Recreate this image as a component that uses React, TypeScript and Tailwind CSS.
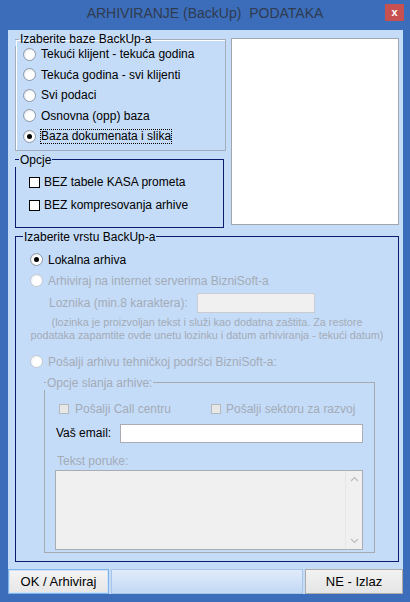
import React from "react";

function Radio({ checked = false, disabled = false }: { checked?: boolean; disabled?: boolean }) {
  return (
    <span
      className={
        "flex h-[13px] w-[13px] shrink-0 items-center justify-center rounded-full border " +
        (disabled
          ? "border-[#c3cad3] bg-[radial-gradient(circle_at_60%_60%,#ffffff_45%,#e4e7ec_100%)]"
          : "border-[#8e99a9] bg-[radial-gradient(circle_at_60%_60%,#ffffff_45%,#cfd4dc_100%)]")
      }
    >
      {checked && <span className="h-[5px] w-[5px] rounded-full bg-black" />}
    </span>
  );
}

function Check({ disabled = false }: { disabled?: boolean }) {
  return (
    <span
      className={
        disabled
          ? "h-[10px] w-[10px] shrink-0 border border-[#b4b8be] bg-[#e8e8e8]"
          : "h-[11px] w-[11px] shrink-0 border border-black bg-white"
      }
    />
  );
}

// legend with the short border stub drawn before the text
function Legend({ text, line, lead = 4, className = "" }: { text: string; line: string; lead?: number; className?: string }) {
  return (
    <legend className={"-ml-px flex h-[14px] items-center leading-[14px] " + className}>
      <span className={"h-px " + line} style={{ width: lead }} />
      <span className="px-[1px]">{text}</span>
    </legend>
  );
}

export default function App() {
  const dis = "text-[#a3abb7]";
  return (
    <div className="flex h-[602px] w-[410px] flex-col bg-[#3c6dba] font-['Liberation_Sans',Arial,sans-serif] text-[12px] text-black">
      {/* title bar */}
      <div className="grid h-[30px] grid-cols-[1fr_auto_1fr]">
        <div />
        <div className="whitespace-pre pt-[5px] text-[14px] leading-[16px] text-[#2f3b4f]">
          ARHIVIRANJE (BackUp)  PODATAKA
        </div>
        <div className="flex justify-end pr-[6px] pt-[4px]">
          <div className="flex h-[17px] w-[19px] items-center justify-center bg-[#c75050] text-[11px] font-bold leading-none text-white">
            x
          </div>
        </div>
      </div>

      {/* client */}
      <div className="mb-[8px] ml-[8px] mr-[7px] flex flex-1 flex-col bg-[#c5dcf8]">
        <div className="flex flex-col pl-[7px] pr-[4px] pt-[2px]">
          <div className="flex items-start">
            <div className="flex w-[212px] flex-col">
              <fieldset className="border border-[#a4adb9] pb-[3px] shadow-[inset_1px_1px_0_#fff]">
                <Legend text="Izaberite baze BackUp-a" line="bg-[#a4adb9]" />
                <div className="-mt-[2px] flex flex-col pl-[7px]">
                  {[
                    "Tekući klijent - tekuća godina",
                    "Tekuća godina - svi klijenti",
                    "Svi podaci",
                    "Osnovna (opp) baza",
                  ].map((t) => (
                    <div key={t} className="flex h-[20.5px] items-center gap-[5px]">
                      <Radio />
                      <span>{t}</span>
                    </div>
                  ))}
                  <div className="flex h-[20.5px] items-center gap-[4px]">
                    <Radio checked />
                    <span className="border border-dotted border-black leading-[13px]">
                      Baza dokumenata i slika
                    </span>
                  </div>
                </div>
              </fieldset>

              <fieldset className="mt-[2px] w-[209px] border border-[#0d1c6e] pb-[10px]">
                <Legend text="Opcje" line="bg-[#0d1c6e]" />
                <div className="flex flex-col pl-[13px] pt-[4px]">
                  <div className="flex h-[23px] items-center gap-[4px]">
                    <Check />
                    <span>BEZ tabele KASA prometa</span>
                  </div>
                  <div className="flex h-[23px] items-center gap-[4px]">
                    <Check />
                    <span>BEZ kompresovanja arhive</span>
                  </div>
                </div>
              </fieldset>
            </div>
            <div className="ml-[5px] mt-[6px] h-[187px] w-[168px] border border-[#a2a7ae] bg-white" />
          </div>

          <fieldset className="mt-[2px] border border-[#0d1c6e] pb-[8px] pl-[4px] pr-[4px]">
            <Legend text="Izaberite vrstu BackUp-a" line="bg-[#0d1c6e]" className="-ml-[5px]" />
            <div className="flex flex-col">
              <div className="mt-[6px] flex h-[20px] items-center gap-[5px] pl-[10px]">
                <Radio checked />
                <span>Lokalna arhiva</span>
              </div>
              <div className="mt-[1px] flex h-[20px] items-center gap-[5px] pl-[10px]">
                <Radio disabled />
                <span className={dis}>Arhiviraj na internet serverima BizniSoft-a</span>
              </div>
              <div className="mt-[2px] flex h-[20px] items-center pl-[29px]">
                <span className={"w-[148px] " + dis}>Loznika (min.8 karaktera):</span>
                <div className="h-[20px] w-[118px] border border-[#c9ccd1] bg-[#f0f0f0]" />
              </div>
              <div className={"mt-[3px] text-center text-[10.8px] leading-[13px] " + dis}>
                <div>(lozinka je proizvoljan tekst i služi kao dodatna zaštita. Za restore</div>
                <div>podataka zapamtite ovde unetu lozinku i datum arhiviranja - tekući datum)</div>
              </div>
              <div className="mt-[10px] flex h-[20px] items-center gap-[5px] pl-[10px]">
                <Radio disabled />
                <span className={dis}>Pošalji arhivu tehničkoj podršci BizniSoft-a:</span>
              </div>

              <fieldset className="ml-[24px] mt-[4px] w-[331px] border border-[#a7abb1] pb-[2px]">
                <Legend text="Opcje slanja arhive:" line="bg-[#a7abb1]" lead={2} className={dis} />
                <div className="flex flex-col">
                  <div className="mt-[9px] flex h-[20px] items-center pl-[14px]">
                    <div className="flex w-[152px] items-center gap-[6px]">
                      <Check disabled />
                      <span className={dis}>Pošalji Call centru</span>
                    </div>
                    <div className="flex items-center gap-[5px]">
                      <Check disabled />
                      <span className={dis}>Pošalji sektoru za razvoj</span>
                    </div>
                  </div>
                  <div className="mt-[5px] flex h-[19px] items-center pl-[11px]">
                    <span className="w-[64px]">Vaš email:</span>
                    <div className="h-[19px] w-[243px] border border-[#a9adb3] bg-white" />
                  </div>
                  <div className={"mt-[11px] h-[14px] pl-[12px] leading-[14px] " + dis}>Tekst poruke:</div>
                  <div className="ml-[10px] mt-[2px] flex h-[80px] w-[308px] border border-[#a9adb3] bg-[#f0f0f0]">
                    <div className="flex-1" />
                    <div className="flex w-[17px] flex-col items-center justify-between border-l border-[#e6e6e6] py-[5px]">
                      <svg width="9" height="6" viewBox="0 0 9 6">
                        <polyline points="1,5 4.5,1.5 8,5" fill="none" stroke="#bcbcbc" strokeWidth="1.2" />
                      </svg>
                      <svg width="9" height="6" viewBox="0 0 9 6">
                        <polyline points="1,1 4.5,4.5 8,1" fill="none" stroke="#bcbcbc" strokeWidth="1.2" />
                      </svg>
                    </div>
                  </div>
                </div>
              </fieldset>
            </div>
          </fieldset>
        </div>

        {/* bottom buttons */}
        <div className="mt-auto flex h-[25px] items-stretch gap-[2px]">
          <button className="w-[101px] border border-[#7eb4ea] bg-[linear-gradient(#f4f4f4,#e6e6e6)] text-[13px] shadow-[inset_0_0_0_1px_#cfe4f9]">
            OK / Arhiviraj
          </button>
          <div className="flex-1 border border-[#a9c4e8] bg-[linear-gradient(#e1ecfb,#c2d8f4)]" />
          <button className="w-[98px] border border-[#acacac] bg-[linear-gradient(#f2f2f2,#e5e5e5)] text-[13px]">
            NE - Izlaz
          </button>
        </div>
      </div>
    </div>
  );
}
